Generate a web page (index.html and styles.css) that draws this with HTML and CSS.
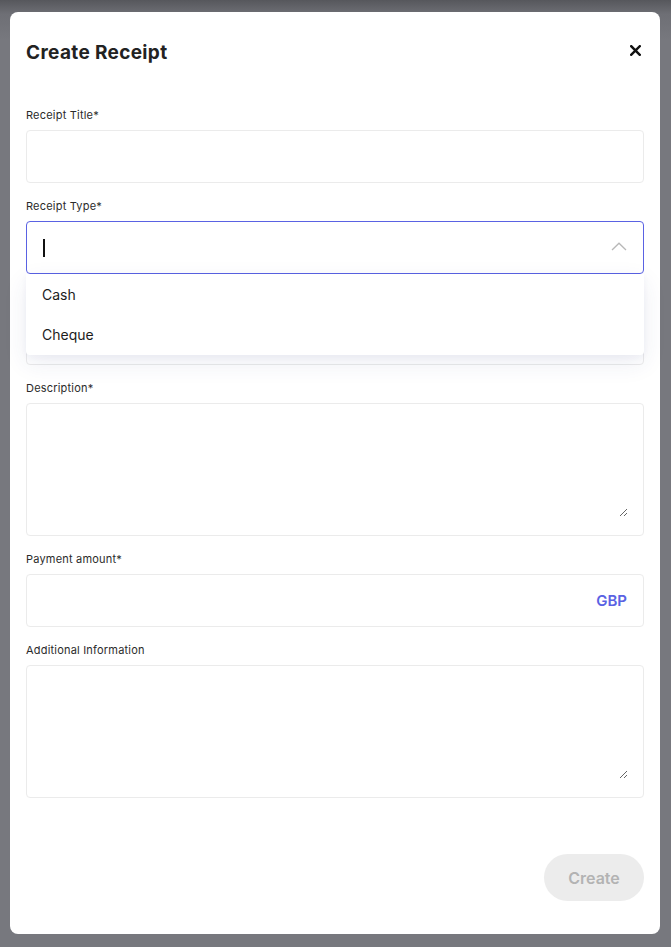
FILE: index.html
```html
<!DOCTYPE html>
<html lang="en">
<head>
<meta charset="utf-8">
<title>Create Receipt</title>
<link rel="stylesheet" href="styles.css">
</head>
<body>
<div class="overlay">
  <div class="modal">
    <div class="modal-header">
      <h1 class="modal-title">Create Receipt</h1>
      <button class="close-btn" aria-label="Close">
        <svg width="11" height="11" viewBox="0 0 11 11"><path d="M1.2 1.2 L9.8 9.8 M9.8 1.2 L1.2 9.8" stroke="#111" stroke-width="2.4" stroke-linecap="square" fill="none"/></svg>
      </button>
    </div>
    <form class="form">
      <div class="field">
        <label class="label">Receipt Title*</label>
        <div class="input"></div>
      </div>
      <div class="field select-field">
        <label class="label">Receipt Type*</label>
        <div class="input input-focus">
          <span class="cursor"></span>
          <svg class="chevron" width="16" height="9" viewBox="0 0 16 9"><path d="M1 8 L8 1.2 L15 8" stroke="#b8b8b8" stroke-width="1.3" fill="none"/></svg>
        </div>
        <ul class="dropdown">
          <li class="option">Cash</li>
          <li class="option">Cheque</li>
        </ul>
      </div>
      <div class="field">
        <label class="label label-hidden">Payment Method*</label>
        <div class="input"></div>
      </div>
      <div class="field">
        <label class="label">Description*</label>
        <div class="textarea-box"><textarea class="textarea"></textarea></div>
      </div>
      <div class="field">
        <label class="label">Payment amount*</label>
        <div class="input input-suffix"><span class="suffix">GBP</span></div>
      </div>
      <div class="field">
        <label class="label">Additional Information</label>
        <div class="textarea-box"><textarea class="textarea"></textarea></div>
      </div>
      <div class="actions">
        <button type="button" class="create-btn" disabled>Create</button>
      </div>
    </form>
  </div>
</div>
</body>
</html>
```

FILE: styles.css
```css
* { box-sizing: border-box; }
html, body { margin: 0; padding: 0; }
body {
  width: 671px;
  height: 947px;
  overflow: hidden;
  font-family: Inter, "Noto Sans", sans-serif;
  background: linear-gradient(to bottom, #56575c 0px, #6e6f75 14px, #77787e 40px, #77787e 100%);
}
.overlay {
  padding: 12px 11px 13px 10px;
}
.modal {
  background: #fff;
  border-radius: 8px;
  height: 922px;
  padding: 28px 16px 33px 16px;
  display: flex;
  flex-direction: column;
}
.modal-header {
  display: flex;
  align-items: center;
  justify-content: space-between;
  height: 24px;
  margin-bottom: 44px;
}
.modal-title {
  margin: 0;
  font-size: 19px;
  font-weight: 700;
  color: #222;
  letter-spacing: 0.35px;
}
.close-btn {
  border: 0;
  background: none;
  padding: 0;
  margin-right: 3px;
  width: 11px;
  height: 11px;
  display: flex;
  margin-top: -3px;
}
.form {
  display: flex;
  flex-direction: column;
  gap: 16px;
  flex: 1;
}
.field {
  display: flex;
  flex-direction: column;
  gap: 8px;
  position: relative;
}
.label {
  font-size: 11px;
  line-height: 14px;
  color: #2b2b2b;
  font-weight: 400;
  letter-spacing: 0.2px;
}
.label-hidden { visibility: hidden; }
.input {
  height: 53px;
  border: 1px solid #ebebeb;
  border-radius: 4px;
  background: #fff;
  display: flex;
  align-items: center;
  padding: 0 16px;
  position: relative;
}
.input-focus {
  border-color: #5a62e3;
  justify-content: space-between;
}
.cursor {
  width: 1.5px;
  height: 18px;
  background: #111;
}
.chevron { margin-top: -2px; }
.dropdown {
  position: absolute;
  left: 0;
  right: 0;
  top: 75px;
  margin: 0;
  padding: 0;
  list-style: none;
  background: #fff;
  z-index: 5;
  box-shadow: 0 8px 24px rgba(40, 50, 120, 0.09), 0 2px 6px rgba(40, 50, 120, 0.04);
  border-radius: 0 0 4px 4px;
}
.option {
  height: 40px;
  display: flex;
  align-items: center;
  padding: 0 16px;
  font-size: 14px;
  color: #1c1c1c;
}
.option:last-child { height: 41px; }
.textarea-box {
  height: 133px;
  border: 1px solid #ebebeb;
  border-radius: 4px;
  background: #fff;
  padding: 12px 15px 18px 16px;
  display: flex;
}
.textarea {
  flex: 1;
  border: 0;
  padding: 0;
  font-family: inherit;
  resize: vertical;
  outline: none;
  background: transparent;
}
.input-suffix { justify-content: flex-end; }
.suffix {
  color: #5a62e3;
  font-weight: 600;
  font-size: 15px;
}
.actions {
  margin-top: auto;
  display: flex;
  justify-content: flex-end;
}
.create-btn {
  width: 100px;
  height: 47px;
  border-radius: 24px;
  border: 0;
  background: #ececec;
  color: #b3b3b3;
  font-family: inherit;
  font-size: 16px;
  font-weight: 600;
}
```
